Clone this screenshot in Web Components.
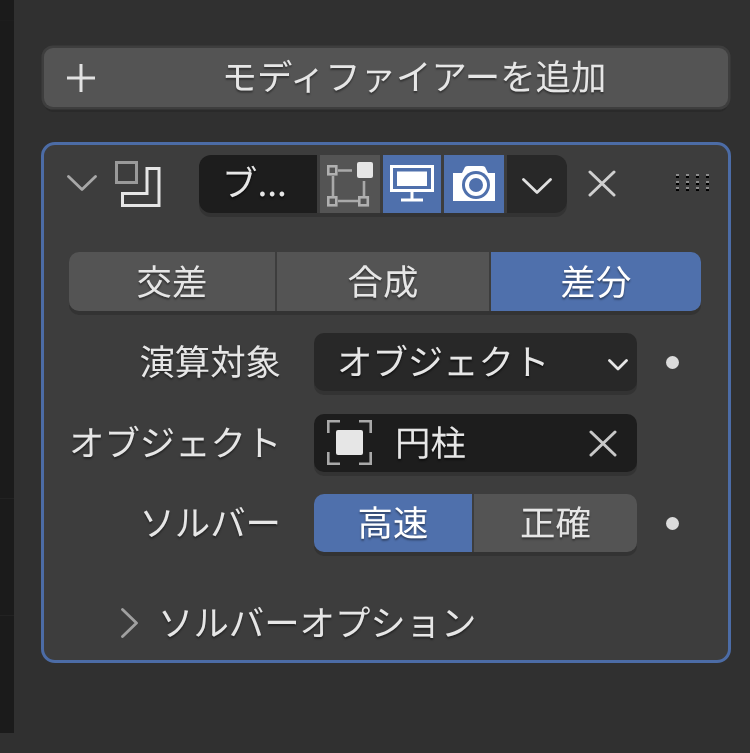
<!DOCTYPE html>
<html lang="ja">
<head>
<meta charset="utf-8">
<title>モディファイアー</title>
<style>
html, body { margin: 0; height: 100%; overflow: hidden; }
body { background: #303030; color: #e6e6e6; font: 35.4px/1 "Noto Sans CJK JP", "Noto Sans", sans-serif; text-rendering: geometricPrecision; }
</style>
</head>
<body>
<bl-editor>
  <bl-add-button>モディファイアーを追加</bl-add-button>
  <bl-modifier-panel>
    <bl-modifier-header slot="header" name="ブ..."></bl-modifier-header>
    <bl-segments class="tabs">
      <bl-seg grow="206">交差</bl-seg>
      <bl-seg grow="212">合成</bl-seg>
      <bl-seg grow="210" active>差分</bl-seg>
    </bl-segments>
    <bl-prop-row label="演算対象" dot>
      <bl-select>オブジェクト</bl-select>
    </bl-prop-row>
    <bl-prop-row label="オブジェクト">
      <bl-object-field>円柱</bl-object-field>
    </bl-prop-row>
    <bl-prop-row label="ソルバー" dot>
      <bl-segments compact>
        <bl-seg grow="158" active>高速</bl-seg>
        <bl-seg grow="163">正確</bl-seg>
      </bl-segments>
    </bl-prop-row>
    <bl-subpanel>ソルバーオプション</bl-subpanel>
  </bl-modifier-panel>
</bl-editor>

<script>
// shared icon strings, coordinates are plain screen px inside each box
const ICONS = {
    plus: `<svg width="28" height="28" viewBox="0 0 28 28"><path d="M14 0V28M0 14H28" stroke="#e2e2e2" stroke-width="3"/></svg>`,
    chevronDown: `<svg width="30" height="16" viewBox="0 0 30 16" fill="none"><path d="M1.500 1.500L15 14.500L28.500 1.500" stroke="currentColor" stroke-width="2.800" stroke-linecap="round" stroke-linejoin="round"/></svg>`,
    cross: `<svg width="28" height="27" viewBox="0 0 28 27" fill="none"><path d="M2 2L26 25M26 2L2 25" stroke="currentColor" stroke-width="3" stroke-linecap="round"/></svg>`,
};

class BlEditor extends HTMLElement {
    constructor() {
        super();
        this.attachShadow({mode: 'open'});
        this.shadowRoot.innerHTML = `<style>
        :host { display: flex; height: 753px; filter: blur(.45px); }
        .side { flex: 0 0 14px; height: 733px; background:
            linear-gradient(#1d1d1d, #1d1d1d) 0 20px / 14px 1px no-repeat,
            linear-gradient(#222, #222) 0 498px / 14px 1px no-repeat,
            linear-gradient(#222, #222) 0 615px / 14px 1px no-repeat,
            #1b1b1b; }
        .main { flex: 1; padding: 48px 19px 0 27px; display: flex; flex-direction: column; gap: 35px; }
        </style>
        <div class="side"></div>
        <div class="main"><slot></slot></div>`;
    }
}

class BlAddButton extends HTMLElement {
    constructor() {
        super();
        this.attachShadow({mode: 'open'});
        this.shadowRoot.innerHTML = `<style>
        :host { display: flex; align-items: center; height: 59px; margin: 0 3px; padding-left: 23px;
            background: #545454; border-radius: 9px; box-shadow: 0 0 0 2.500px #3e3e3e, 0 5px 0 0 #2a2a2a; }
        span { flex: 1; text-align: center; margin-top: -3px; padding-left: 5px; text-shadow: 0 2px 2px #0006; }
        svg { display: block; }
        </style>${ICONS.plus}<span><slot></slot></span>`;
    }
}

class BlModifierPanel extends HTMLElement {
    constructor() {
        super();
        this.attachShadow({mode: 'open'});
        this.shadowRoot.innerHTML = `<style>
        :host { display: block; box-sizing: border-box; height: 521px; padding: 10px 0 0 25px;
            background: #3d3d3d; border: 3px solid #4c6ca6; border-radius: 14px; }
        .body { display: flex; flex-direction: column; gap: 22.500px; width: 632px; margin-top: 39px; }
        </style>
        <slot name="header"></slot>
        <div class="body"><slot></slot></div>`;
    }
}

class BlModifierHeader extends HTMLElement {
    constructor() {
        super();
        this.attachShadow({mode: 'open'});
        const name = this.getAttribute('name');
        this.shadowRoot.innerHTML = `<style>
        :host { display: flex; align-items: center; height: 58px; margin-left: -2px; color: #a8a8a8; }
        svg { display: block; flex: none; }
        .fold { margin-right: 18px; margin-top: -2px; }
        .kind { margin-right: 38px; margin-top: -1px; }
        .group { display: flex; gap: 3px; height: 58px; border-radius: 12px; box-shadow: 0 4px 0 0 #333; }
        .group > div { display: flex; align-items: center; justify-content: center; }
        .name { width: 118px; box-sizing: border-box; padding-right: 7px; background: #1d1d1d; border-radius: 12px 0 0 12px; color: #e6e6e6; text-shadow: 0 2px 2px #0008; }
        .name span { margin-top: -4px; }
        .edit { width: 60px; background: #545454; }
        .view { width: 58px; background: #4f70ac; }
        .cam { width: 60px; background: #4f70ac; }
        .cam svg { margin-top: -2px; }
        .more { width: 60px; box-sizing: border-box; padding-top: 3px; background: #282828; border-radius: 0 12px 12px 0; color: #e0e0e0; }
        .close { margin-left: 21px; color: #d0d0d0; margin-top: -1px; }
        .grip { margin-left: 60px; margin-top: -3px; }
        </style>
        <div class="fold">${ICONS.chevronDown}</div>
        <svg class="kind" width="46" height="46" viewBox="0 0 46 46" fill="none">
          <rect x="1.500" y="1.500" width="20" height="20" stroke="#9a9a9a" stroke-width="3"/>
          <path d="M32 7.500H44V44.500H7.500V32.500H32Z" stroke="#e6e6e6" stroke-width="3"/>
        </svg>
        <div class="group">
          <div class="name"><span>${name}</span></div>
          <div class="edit">
            <svg width="46" height="46" viewBox="0 0 46 46" fill="none">
              <path d="M11 9.500H25M6 15V35M11 40H31M37 20V35" stroke="#a9a9a9" stroke-width="2.600"/>
              <rect x="1.300" y="5.300" width="8" height="8" stroke="#b0b0b0" stroke-width="2.600"/>
              <rect x="1.300" y="36.300" width="8" height="8" stroke="#b0b0b0" stroke-width="2.600"/>
              <rect x="32.300" y="36.300" width="8.500" height="8" stroke="#b0b0b0" stroke-width="2.600"/>
              <rect x="30" y="1" width="16" height="16" rx="2" fill="#e6e6e6"/>
            </svg>
          </div>
          <div class="view">
            <svg width="44" height="38" viewBox="0 0 44 38" fill="none">
              <rect x="1.500" y="1.500" width="41" height="24" stroke="#fff" stroke-width="3"/>
              <rect x="7" y="6.500" width="30" height="14.500" fill="#fff"/>
              <path d="M22 26V34M11 35H33" stroke="#fff" stroke-width="3"/>
            </svg>
          </div>
          <div class="cam">
            <svg width="44" height="36" viewBox="0 0 44 36">
              <path d="M1 8H10L13 2Q14 1 16 1H30Q32 1 33 2L36 8H43V36H1Z" fill="#fff"/>
              <circle cx="24" cy="20" r="14" fill="#4f70ac"/>
              <circle cx="24" cy="20" r="11" fill="#fff"/>
              <circle cx="24" cy="20" r="7" fill="#4f70ac"/>
            </svg>
          </div>
          <div class="more">${ICONS.chevronDown}</div>
        </div>
        <div class="close">${ICONS.cross}</div>
        <svg class="grip" width="33" height="17" viewBox="0 0 33 17">
          <g fill="#8a8a8a"><path d="M0 0h3v2H0zM10 0h3v2h-3zM20 0h3v2h-3zM30 0h3v2h-3zM0 7h3v2H0zM10 7h3v2h-3zM20 7h3v2h-3zM30 7h3v2h-3zM0 13h3v2H0zM10 13h3v2h-3zM20 13h3v2h-3zM30 13h3v2h-3z"/></g>
          <g fill="#000"><path d="M0 2h3v2H0zM10 2h3v2h-3zM20 2h3v2h-3zM30 2h3v2h-3zM0 9h3v2H0zM10 9h3v2h-3zM20 9h3v2h-3zM30 9h3v2h-3zM0 15h3v2H0zM10 15h3v2h-3zM20 15h3v2h-3zM30 15h3v2h-3z"/></g>
        </svg>`;
    }
}

class BlSegments extends HTMLElement {
    constructor() {
        super();
        this.attachShadow({mode: 'open'});
        this.shadowRoot.innerHTML = `<style>
        :host { display: flex; gap: 2px; height: 59px; border-radius: 10px; box-shadow: 0 4px 0 0 #333; }
        :host(.tabs) { margin-bottom: -.500px; }
        :host([compact]) { flex: 1; height: 58px; }
        ::slotted(bl-seg:first-child) { border-radius: 10px 0 0 10px; }
        ::slotted(bl-seg:last-child) { border-radius: 0 10px 10px 0; }
        </style><slot></slot>`;
    }
}

class BlSeg extends HTMLElement {
    constructor() {
        super();
        this.attachShadow({mode: 'open'});
        this.style.flex = (this.getAttribute('grow') || 1) + ' 1 0';
        this.shadowRoot.innerHTML = `<style>
        :host { display: flex; align-items: center; justify-content: center; background: #545454; text-shadow: 0 2px 2px #0006; }
        :host([active]) { background: #4f70ac; color: #fff; }
        span { margin-top: -2px; }
        </style><span><slot></slot></span>`;
    }
}

class BlPropRow extends HTMLElement {
    constructor() {
        super();
        this.attachShadow({mode: 'open'});
        const label = this.getAttribute('label');
        this.shadowRoot.innerHTML = `<style>
        :host { display: grid; grid-template-columns: 245px 323px 64px; align-items: center; min-height: 58px; }
        .label { text-align: right; padding-right: 33px; margin-top: -2px; white-space: nowrap; text-shadow: 0 2px 2px #0006; }
        .slot { display: flex; }
        .dot { display: none; width: 13px; height: 13px; margin-left: 29px; border-radius: 50%; background: #dcdcdc; }
        :host([dot]) .dot { display: block; }
        </style>
        <div class="label">${label}</div>
        <div class="slot"><slot></slot></div>
        <div class="dot"></div>`;
    }
}

class BlSelect extends HTMLElement {
    constructor() {
        super();
        this.attachShadow({mode: 'open'});
        this.shadowRoot.innerHTML = `<style>
        :host { display: flex; flex: 1; align-items: center; justify-content: space-between; height: 58px; box-sizing: border-box;
            padding: 0 9px 0 23px; background: #282828; border-radius: 10px; box-shadow: 0 4px 0 0 #333; text-shadow: 0 2px 2px #0008; }
        span { margin-top: -2px; }
        svg { display: block; margin-top: 6px; }
        </style>
        <span><slot></slot></span>
        <svg width="20" height="12" viewBox="0 0 20 12" fill="none"><path d="M1.500 1.500L10 10L18.500 1.500" stroke="#e6e6e6" stroke-width="2.800" stroke-linecap="round" stroke-linejoin="round"/></svg>`;
    }
}

class BlObjectField extends HTMLElement {
    constructor() {
        super();
        this.attachShadow({mode: 'open'});
        this.shadowRoot.innerHTML = `<style>
        :host { display: flex; flex: 1; align-items: center; height: 58px; box-sizing: border-box; padding: 0 20px 0 13px;
            background: #1d1d1d; border-radius: 10px; box-shadow: 0 4px 0 0 #333; text-shadow: 0 2px 2px #0008; }
        span { flex: 1; margin-left: 23px; margin-top: -2px; }
        svg { display: block; }
        .x { color: #c8c8c8; margin-top: 1px; }
        </style>
        <svg width="45" height="45" viewBox="0 0 45 45" fill="none">
          <path d="M1.300 13V1.300H13M32 1.300H43.700V13M1.300 32V43.700H13M32 43.700H43.700V32" stroke="#a9a9a9" stroke-width="2.600"/>
          <rect x="9" y="10" width="27" height="25" rx="2" fill="#e6e6e6"/>
        </svg>
        <span><slot></slot></span>
        <div class="x">${ICONS.cross}</div>`;
    }
}

class BlSubpanel extends HTMLElement {
    constructor() {
        super();
        this.attachShadow({mode: 'open'});
        this.shadowRoot.innerHTML = `<style>
        :host { display: flex; align-items: center; gap: 20px; height: 40px; margin: 28.500px 0 0 52px; text-shadow: 0 2px 2px #0006; }
        svg { display: block; }
        span { margin-top: -2px; }
        </style>
        <svg width="17" height="30" viewBox="0 0 17 30" fill="none"><path d="M1.500 1.500L15.500 15L1.500 28.500" stroke="#a0a0a0" stroke-width="2.800" stroke-linecap="round" stroke-linejoin="round"/></svg>
        <span><slot></slot></span>`;
    }
}

customElements.define('bl-editor', BlEditor);
customElements.define('bl-add-button', BlAddButton);
customElements.define('bl-modifier-panel', BlModifierPanel);
customElements.define('bl-modifier-header', BlModifierHeader);
customElements.define('bl-segments', BlSegments);
customElements.define('bl-seg', BlSeg);
customElements.define('bl-prop-row', BlPropRow);
customElements.define('bl-select', BlSelect);
customElements.define('bl-object-field', BlObjectField);
customElements.define('bl-subpanel', BlSubpanel);
</script>
</body>
</html>
